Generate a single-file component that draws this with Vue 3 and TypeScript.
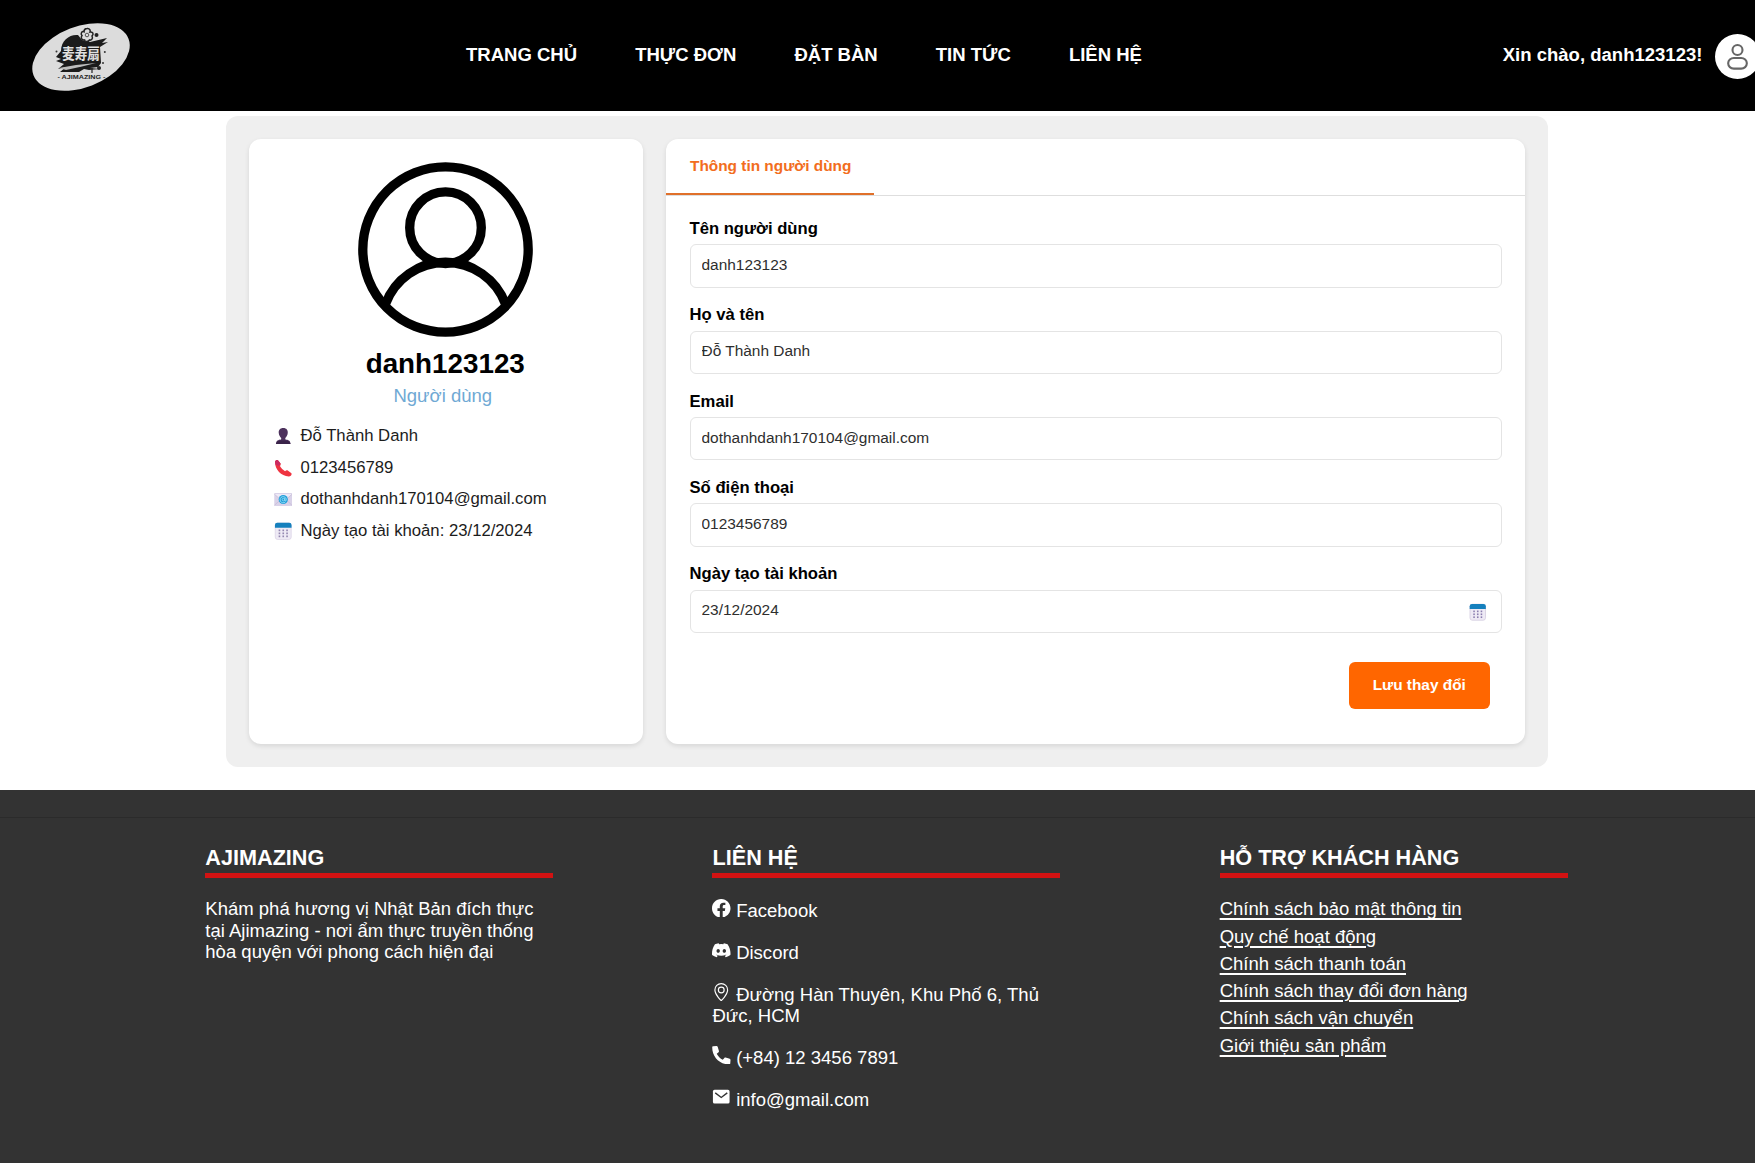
<script setup lang="ts">
import { ref } from 'vue'

interface Field {
  label: string
  value: string
  calendar?: boolean
}

const navItems: string[] = ['TRANG CHỦ', 'THỰC ĐƠN', 'ĐẶT BÀN', 'TIN TỨC', 'LIÊN HỆ']

const fields = ref<Field[]>([
  { label: 'Tên người dùng', value: 'danh123123' },
  { label: 'Họ và tên', value: 'Đỗ Thành Danh' },
  { label: 'Email', value: 'dothanhdanh170104@gmail.com' },
  { label: 'Số điện thoại', value: '0123456789' },
  { label: 'Ngày tạo tài khoản', value: '23/12/2024', calendar: true },
])

const policies: string[] = [
  'Chính sách bảo mật thông tin',
  'Quy chế hoạt động',
  'Chính sách thanh toán',
  'Chính sách thay đổi đơn hàng',
  'Chính sách vận chuyển',
  'Giới thiệu sản phẩm',
]

const dotColumns: number[] = [5.2, 9, 12.8]
const dotRows: number[] = [8, 11, 14]
</script>

<template>
  <div class="page">
    <header class="header">
      <svg class="logo" viewBox="0 0 98 68">
        <ellipse cx="49" cy="34" rx="50.9" ry="30.4" transform="rotate(-21 49 34)" fill="#dcdcdc" />
        <path d="M29 28C29 17 38 11 46 12L50 17L58 19L75 15L70 20L76 19L68 24L69 40L66 44L58 45L68 46L57 47L52 46L47 49L28 49L34 44L26 46L32 41L24 38L29 36L24 34Z" fill="#1b1b1b" />
        <path d="M27 45L44 42L64 40L50 43.5L34 47Z" fill="#bdbdbd" />
        <path d="M55 5.5C58 5 58.5 8 58 9C61 8.5 62 11 60 13C61.5 16 59 17.5 57.5 17C56 19.5 52.5 18.5 52.5 17C49.5 17.5 48.5 14.5 50 12.5C48 10.5 50 8 52 8.8C52 6.5 53 5.5 55 5.5Z" fill="#dcdcdc" stroke="#222" stroke-width="1.5" />
        <circle cx="55" cy="12" r="1.8" fill="none" stroke="#333" stroke-width=".8" />
        <circle cx="64.5" cy="12" r="2" fill="#222" />
        <circle cx="24.5" cy="28.5" r="1" fill="#333" />
        <circle cx="72.8" cy="29" r="1" fill="#333" />
        <circle cx="71" cy="40" r="1" fill="#333" />
        <circle cx="67" cy="45" r="2" fill="#222" />
        <path d="M60 45V50" stroke="#222" stroke-width="1.2" />
        <text x="49" y="35.5" class="logo-kanji" text-anchor="middle" textLength="38" lengthAdjust="spacingAndGlyphs">麦寿扇</text>
        <text x="49.5" y="56.2" class="logo-name" text-anchor="middle" textLength="48" lengthAdjust="spacingAndGlyphs">- AJIMAZING -</text>
      </svg>
      <nav class="nav">
        <a v-for="item in navItems" :key="item">{{ item }}</a>
      </nav>
      <div class="account">
        <span>Xin chào, danh123123!</span>
        <svg class="avatar" viewBox="0 0 45 45">
          <circle cx="22.5" cy="22.5" r="22.5" fill="#fff" />
          <g fill="none" stroke="#666" stroke-width="2.1">
            <circle cx="22.5" cy="16" r="5" />
            <rect x="13.2" y="24" width="18.6" height="10.6" rx="5.6" ry="5" />
          </g>
        </svg>
      </div>
    </header>

    <main class="profile">
      <section class="card summary">
        <svg class="portrait" viewBox="0 0 175 175" fill="none" stroke="#000" stroke-width="9.3">
          <circle cx="87.5" cy="87.5" r="82.7" />
          <circle cx="87.5" cy="65.7" r="35.8" />
          <path d="M27.5 142A64 64 0 0 1 147.5 142" />
        </svg>
        <h2>danh123123</h2>
        <p class="role">Người dùng</p>
        <ul class="details">
          <li>
            <svg viewBox="0 0 18 18">
              <path d="M9 1C12.3 1 13.8 3.2 13.5 6C13.3 8.5 12 10 11 11L11.2 12.5C14 12.8 16 13.5 16.3 17H1.7C2 13.5 4 12.8 6.8 12.5L7 11C6 10 4.7 8.5 4.5 6C4.2 3.2 5.7 1 9 1Z" fill="#4c315c" />
              <path d="M3 14.5C5 13 13 13 15 14.5L16.3 17H1.7Z" fill="#3a2349" />
            </svg>
            Đỗ Thành Danh
          </li>
          <li>
            <svg viewBox="0 0 18 18">
              <path d="M.8 2.5C1 1.3 2.5 .6 3.5 1L6.3 4.5C6.8 5.5 6.2 6.4 5.7 7.1C6.9 9.2 8.6 11 10.8 12.2C11.6 11.6 12.5 11 13.5 11.5L17.2 14.3C17.8 15.8 16.5 17.4 14.5 17.4C6.6 17 .4 10 .8 2.5Z" fill="#ef3340" />
              <path d="M.8 2.5C1 1.3 2.5 .6 3.5 1L6.3 4.5L4.5 7L1.2 5.5Z" fill="#c92b62" />
            </svg>
            0123456789
          </li>
          <li>
            <svg viewBox="0 0 18 18">
              <rect y="3" width="18" height="13" rx="1" fill="#d9d2e8" />
              <path d="M0 4L9 12L18 4" fill="#eee9f6" stroke="#bdb2cf" stroke-width=".6" />
              <path d="M0 15.5L7 9M18 15.5L11 9" stroke="#c1b6d3" stroke-width=".6" />
              <circle cx="9" cy="9.5" r="4.6" fill="#229fd9" />
              <path d="M11 12A3.1 3.1 0 1 1 12 9.5C12 11.5 10.5 11.2 10.5 9.8V8.3" fill="none" stroke="#a6e7fa" stroke-width=".8" />
              <circle cx="9.2" cy="9.6" r="1.3" fill="none" stroke="#a6e7fa" stroke-width=".7" />
            </svg>
            dothanhdanh170104@gmail.com
          </li>
          <li>
            <svg viewBox="0 0 18 18">
              <rect x="1" y="1" width="16" height="16.5" rx="2.5" fill="#eeeaf5" stroke="#d5cde0" stroke-width=".6" />
              <path d="M.7 5.8V3Q.7 .7 3 .7H15Q17.3 .7 17.3 3V5.8Z" fill="#1580bd" />
              <template v-for="y in dotRows" :key="y">
                <rect v-for="x in dotColumns" :key="x" :x="x - 0.8" :y="y - 0.5" width="1.6" height="1.7" fill="#9387b0" />
              </template>
            </svg>
            Ngày tạo tài khoản: 23/12/2024
          </li>
        </ul>
      </section>

      <section class="card editor">
        <div class="tabs"><button type="button" class="tab">Thông tin người dùng</button></div>
        <form class="form" @submit.prevent>
          <label v-for="field in fields" :key="field.label" class="field">
            <span class="field-label">{{ field.label }}</span>
            <span class="control">
              <input v-model="field.value" type="text" spellcheck="false" />
              <svg v-if="field.calendar" class="calendar" viewBox="0 0 18 18">
                <rect x="1" y="1" width="16" height="16.5" rx="2.5" fill="#eeeaf5" stroke="#cfc6dc" stroke-width=".7" />
                <path d="M.7 5.8V3Q.7 .7 3 .7H15Q17.3 .7 17.3 3V5.8Z" fill="#1580bd" />
                <template v-for="y in dotRows" :key="y">
                  <rect v-for="x in dotColumns" :key="x" :x="x - 0.8" :y="y - 0.5" width="1.6" height="1.7" fill="#8b7eaf" />
                </template>
              </svg>
            </span>
          </label>
          <button type="submit" class="save">Lưu thay đổi</button>
        </form>
      </section>
    </main>

    <footer class="footer">
      <div class="columns">
        <section>
          <h3>AJIMAZING</h3>
          <p class="about">Khám phá hương vị Nhật Bản đích thực tại Ajimazing - nơi ẩm thực truyền thống hòa quyện với phong cách hiện đại</p>
        </section>
        <section>
          <h3>LIÊN HỆ</h3>
          <div class="contacts">
            <p>
              <svg viewBox="0 0 16 16"><path d="M16 8.049c0-4.446-3.582-8.05-8-8.05C3.58 0-.002 3.603-.002 8.05c0 4.017 2.926 7.347 6.75 7.951v-5.625h-2.03V8.05H6.75V6.275c0-2.017 1.195-3.131 3.022-3.131.876 0 1.791.157 1.791.157v1.98h-1.009c-.993 0-1.303.621-1.303 1.258v1.51h2.218l-.354 2.326H9.25V16c3.824-.604 6.75-3.934 6.75-7.951" /></svg>
              Facebook
            </p>
            <p>
              <svg viewBox="0 0 16 16"><path d="M13.545 2.907a13.2 13.2 0 0 0-3.257-1.011.05.05 0 0 0-.052.025c-.141.25-.297.577-.406.833a12.2 12.2 0 0 0-3.658 0 8 8 0 0 0-.412-.833.05.05 0 0 0-.052-.025c-1.125.194-2.22.534-3.257 1.011a.04.04 0 0 0-.021.018C.356 6.024-.213 9.047.066 12.032q.003.022.021.037a13.3 13.3 0 0 0 3.995 2.02.05.05 0 0 0 .056-.019q.463-.63.818-1.329a.05.05 0 0 0-.01-.059l-.018-.011a9 9 0 0 1-1.248-.595.05.05 0 0 1-.02-.066l.015-.019q.127-.095.248-.195a.05.05 0 0 1 .051-.007c2.619 1.196 5.454 1.196 8.041 0a.05.05 0 0 1 .053.007q.121.1.248.195a.05.05 0 0 1-.004.085 8 8 0 0 1-1.249.594.05.05 0 0 0-.03.03.05.05 0 0 0 .003.041c.24.465.515.909.817 1.329a.05.05 0 0 0 .056.019 13.2 13.2 0 0 0 4.001-2.02.05.05 0 0 0 .021-.037c.334-3.451-.559-6.449-2.366-9.106a.03.03 0 0 0-.02-.019m-8.198 7.307c-.789 0-1.438-.724-1.438-1.612s.637-1.613 1.438-1.613c.807 0 1.45.73 1.438 1.613 0 .888-.637 1.612-1.438 1.612m5.316 0c-.788 0-1.438-.724-1.438-1.612s.637-1.613 1.438-1.613c.807 0 1.451.73 1.438 1.613 0 .888-.631 1.612-1.438 1.612" /></svg>
              Discord
            </p>
            <p>
              <svg viewBox="0 0 16 16"><path d="M12.166 8.94c-.524 1.062-1.234 2.12-1.96 3.07A32 32 0 0 1 8 14.58a32 32 0 0 1-2.206-2.57c-.726-.95-1.436-2.008-1.96-3.07C3.304 7.867 3 6.862 3 6a5 5 0 0 1 10 0c0 .862-.305 1.867-.834 2.94M8 16s6-5.686 6-10A6 6 0 0 0 2 6c0 4.314 6 10 6 10" /><path d="M8 8a2 2 0 1 1 0-4 2 2 0 0 1 0 4m0 1a3 3 0 1 0 0-6 3 3 0 0 0 0 6" /></svg>
              Đường Hàn Thuyên, Khu Phố 6, Thủ Đức, HCM
            </p>
            <p>
              <svg viewBox="0 0 16 16"><path d="M.2 1.1C.2.5.6.2 1.1.2L3.9 0C4.4 0 4.700.2 4.900.7L6 4.300C6.100 4.700 6 5 5.700 5.300L4.100 6.700C5.200 8.900 7.100 10.900 9.300 11.900L10.700 10.300C11 10 11.300 9.900 11.700 10L15.300 11.100C15.800 11.300 16 11.600 16 12.100L15.800 14.900C15.800 15.500 15.400 15.900 14.900 15.900C6.600 16.100.1 9.300.2 1.100Z" /></svg>
              (+84) 12 3456 7891
            </p>
            <p>
              <svg viewBox="0 0 16 16"><path d="M2.2 1.6H13.8Q15.2 1.6 15.2 3V12Q15.2 13.4 13.8 13.4H2.2Q.8 13.4 .8 12V3Q.8 1.6 2.2 1.6Z" /><path d="M2.8 4.2L8 8.2L13.2 4.2" fill="none" stroke="#333" stroke-width="1.2" /></svg>
              info@gmail.com
            </p>
          </div>
        </section>
        <section>
          <h3>HỖ TRỢ KHÁCH HÀNG</h3>
          <ul class="policies">
            <li v-for="policy in policies" :key="policy"><a>{{ policy }}</a></li>
          </ul>
        </section>
      </div>
    </footer>
  </div>
</template>

<style>
body {
  background: #fff;
}
</style>

<style scoped>
.page {
  width: 100%;
  height: 1163px;
  overflow: hidden;
  display: flex;
  flex-direction: column;
  font-family: "Liberation Sans", Arial, sans-serif;
  font-size: 18.52px;
  color: #000;
}
.page * {
  box-sizing: border-box;
}
h2, h3, p, ul {
  margin: 0;
  padding: 0;
}
ul {
  list-style: none;
}
.header {
  flex: none;
  height: 111.4px;
  padding-left: 32px;
  display: flex;
  align-items: center;
  background: #000;
  color: #fff;
  font-weight: 700;
}
.logo {
  width: 98px;
  height: 68px;
  margin-top: 2px;
  overflow: visible;
}
.logo-kanji {
  font: 700 15px "Noto Sans CJK JP", sans-serif;
  fill: #e0e0e0;
}
.logo-name {
  font: 700 5.6px "Liberation Sans", sans-serif;
  fill: #222;
}
.nav {
  margin-left: 336px;
  margin-top: -1px;
  display: flex;
  gap: 58.1px;
  white-space: nowrap;
}
.account {
  margin-left: auto;
  margin-right: -5px;
  display: flex;
  align-items: center;
  gap: 12.6px;
  white-space: nowrap;
}
.account span {
  margin-top: -1px;
}
.avatar {
  width: 45px;
  height: 45px;
  margin-top: 2px;
}
.profile {
  flex: none;
  width: 1322.5px;
  height: 651px;
  margin: 4.5px 0 23.4px 225.5px;
  padding: 23px;
  display: flex;
  gap: 23px;
  background: #efefef;
  border-radius: 12px;
}
.card {
  background: #fff;
  border-radius: 12px;
  box-shadow: 0 2px 5px rgba(0, 0, 0, 0.1);
}
.summary {
  width: 394.5px;
  padding-top: 23px;
  display: flex;
  flex-direction: column;
}
.portrait {
  width: 175px;
  height: 175px;
  flex: none;
  align-self: center;
}
.summary h2 {
  margin-top: 11.5px;
  padding-right: 1px;
  font-size: 27.8px;
  line-height: 32px;
  text-align: center;
}
.role {
  margin-top: 5px;
  padding-right: 6px;
  line-height: 22px;
  text-align: center;
  color: #6fa9d4;
}
.details {
  margin-top: 12.7px;
  padding-left: 25px;
}
.details li {
  height: 31.7px;
  display: flex;
  align-items: center;
  gap: 8.5px;
  font-size: 16.7px;
  color: #1c1c1c;
}
.details svg {
  width: 18.5px;
  height: 18px;
}
.editor {
  flex: 1;
}
.tabs {
  height: 57px;
  border-bottom: 1px solid #dedede;
}
.tab {
  height: 56.5px;
  padding: 0 23px 1px 24px;
  border: 0;
  border-bottom: 2.3px solid #e0702a;
  background: none;
  font: 700 15.4px "Liberation Sans", Arial, sans-serif;
  color: #f26d20;
}
.form {
  padding: 22.5px 23.5px 0;
  display: flex;
  flex-direction: column;
}
.field {
  height: 86.35px;
  display: flex;
  flex-direction: column;
}
.field-label {
  height: 20px;
  margin-bottom: 5.8px;
  padding-top: 0.7px;
  font-size: 16.65px;
  font-weight: 700;
  line-height: 20px;
}
.control {
  height: 43.5px;
  padding: 0 14px 0 11px;
  display: flex;
  align-items: center;
  border: 1px solid #e4e4e4;
  border-radius: 6px;
}
.control input {
  flex: 1;
  height: 20px;
  margin-bottom: 2px;
  padding: 0;
  border: 0;
  outline: 0;
  background: transparent;
  font: 15.45px "Liberation Sans", Arial, sans-serif;
  color: #2e2e2e;
}
.calendar {
  width: 17.5px;
  height: 18px;
  margin-top: 2px;
}
.save {
  width: 140.5px;
  height: 47px;
  margin: 11.5px 12px 0 0;
  padding: 0;
  align-self: flex-end;
  border: 0;
  border-radius: 6px;
  background: #ff6600;
  font: 700 15.4px "Liberation Sans", Arial, sans-serif;
  color: #fff;
}
.footer {
  flex: 1;
  padding-top: 26.5px;
  background: #333;
  color: #fff;
}
.columns {
  height: 100%;
  padding: 28.5px 0 0 205.3px;
  display: flex;
  gap: 159.2px;
  border-top: 1px solid #2b2b2b;
}
.columns section {
  width: 348px;
}
.columns h3 {
  height: 32px;
  font-size: 21.65px;
  line-height: 24px;
  border-bottom: 5px solid #d21212;
  white-space: nowrap;
}
.about {
  margin-top: 19.8px;
  line-height: 21.6px;
}
.contacts {
  margin-top: 21.4px;
  display: flex;
  flex-direction: column;
  gap: 21px;
}
.contacts p {
  line-height: 21px;
}
.contacts svg {
  width: 18.5px;
  height: 18.5px;
  margin-top: -3px;
  fill: #fff;
  vertical-align: -0.8px;
}
.policies {
  margin-top: 17.1px;
}
.policies li {
  height: 27.25px;
  line-height: 27.25px;
}
.policies a {
  text-decoration: underline;
  text-decoration-thickness: 1.5px;
  text-underline-offset: 3px;
}
</style>
